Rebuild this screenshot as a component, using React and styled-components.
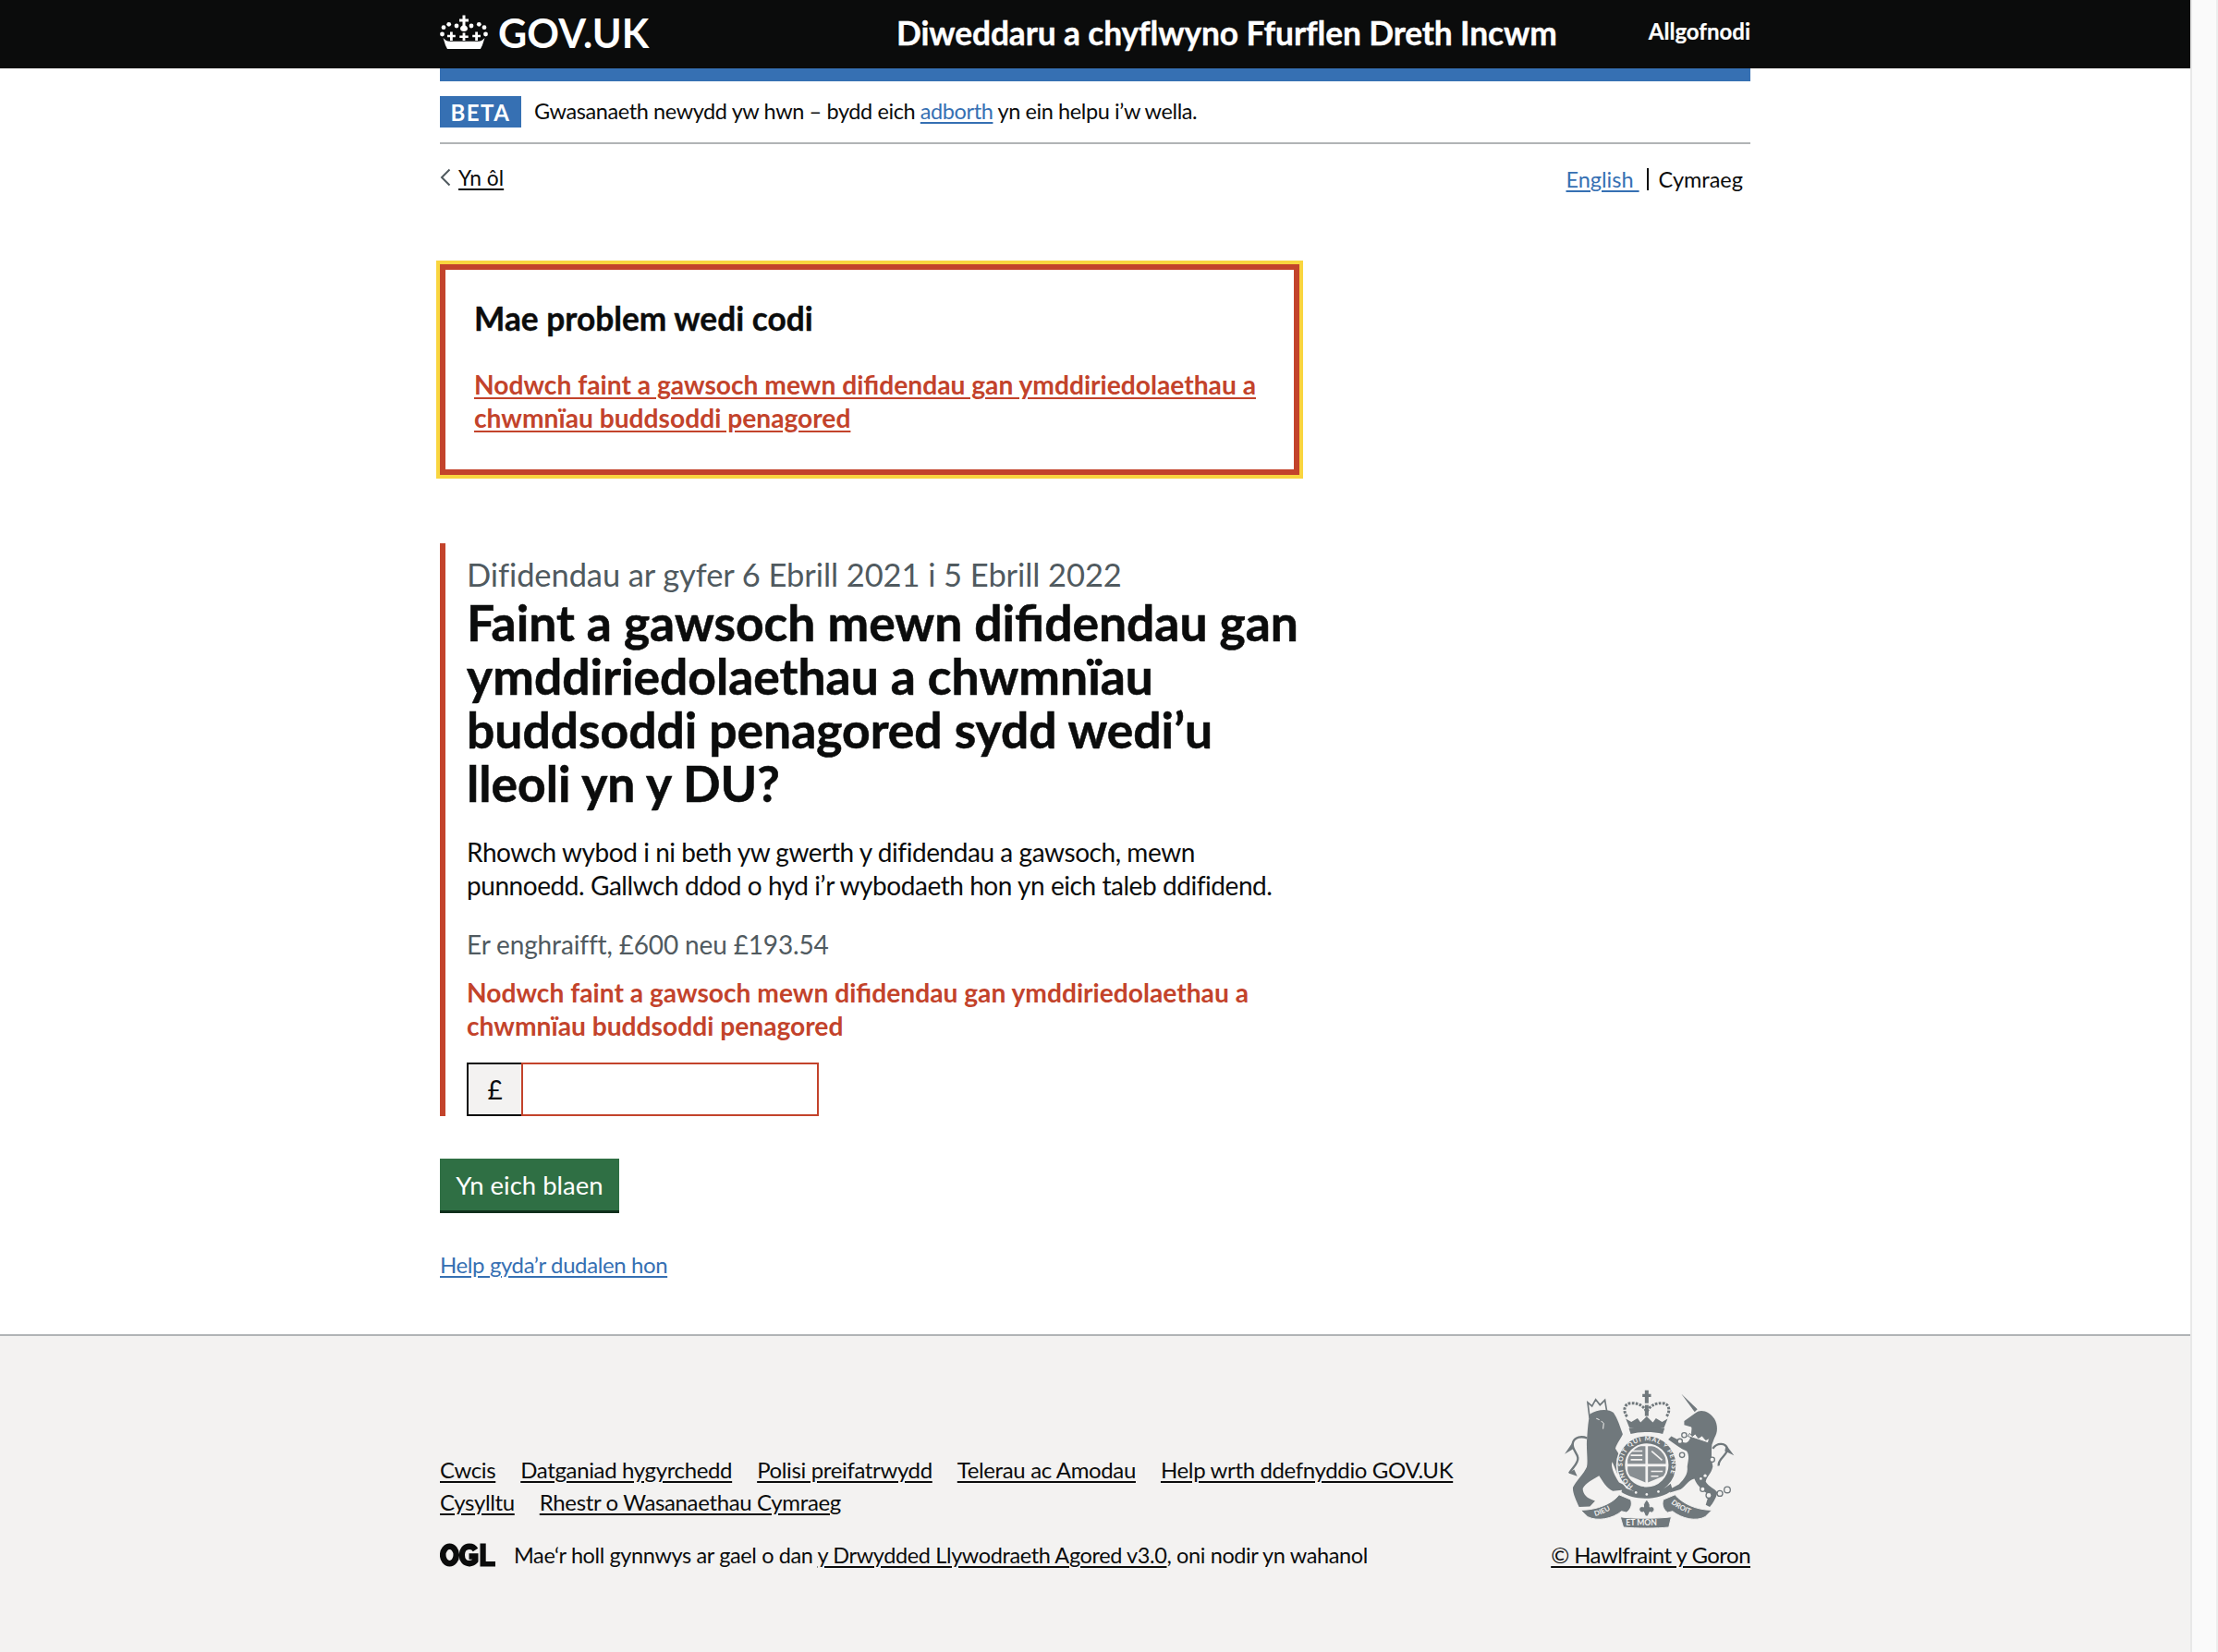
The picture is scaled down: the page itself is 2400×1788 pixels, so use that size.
import React from "react";
import styled, { createGlobalStyle } from "styled-components";

const Global = createGlobalStyle`
  html, body { margin: 0; padding: 0; background: #fff; }
  body { font-family: Lato, "Noto Sans", "Liberation Sans", sans-serif; color: #0b0c0c; }
  * { box-sizing: border-box; }
`;
const Shell = styled.div`display: flex; width: 2400px; height: 1788px; overflow: hidden;`;
const Page = styled.div`width: 2370px; height: 1788px; display: flex; flex-direction: column;`;
const Scrollbar = styled.div`width: 30px; background: #fafafa; border-left: 2px solid #e8e8e8; border-right: 2px solid #ededed;`;
const HeaderBar = styled.header`background: #0b0c0c; height: 74px; color: #fff; flex: none;`;
const Wrap = styled.div`width: 1418px; margin-left: 476px;`;
const HeaderInner = styled(Wrap)`display: flex; align-items: center; height: 74px;`;
const Logo = styled.div`display: flex; align-items: center; gap: 11px; width: 494px; height: 74px; padding-bottom: 3px; font-size: 43px; font-weight: 700; letter-spacing: .1px;`;
const ServiceName = styled.div`flex: 1; font-size: 35.3px; font-weight: 700; white-space: nowrap; letter-spacing: -.1px; margin-top: -3px; -webkit-text-stroke: .4px #fff;`;
const SignOut = styled.a`font-size: 24px; font-weight: 700; margin-top: -7px; -webkit-text-stroke: .2px #fff;`;
const BlueBar = styled(Wrap)`height: 14px; background: #3670b3; flex: none;`;
const Phase = styled(Wrap)`display: flex; align-items: center; gap: 14px; padding: 16px 0; height: 68px; border-bottom: 2px solid #b1b4b6; font-size: 23.5px; letter-spacing: -.4px; flex: none;`;
const PhaseText = styled.span`margin-top: -2px;`;
const Tag = styled.strong`background: #3670b3; color: #fff; width: 88px; height: 34px; display: flex; align-items: center; justify-content: center; font-size: 24px; letter-spacing: 1.5px; font-weight: 700;`;
const BlueLink = styled.a`color: #3670b3; text-decoration: underline; text-underline-offset: 3px;`;
const NavRow = styled(Wrap)`display: flex; justify-content: space-between; padding: 24px 8px 0 0; height: 130px; flex: none;`;
const Back = styled.div`display: flex; align-items: center; gap: 8px; height: 24px; font-size: 22.8px; a { color: #0b0c0c; text-decoration: underline; text-underline-offset: 3px; }`;
const Lang = styled.div`display: flex; align-items: center; height: 24px; font-size: 23.5px; margin-top: 2px;`;
const LangLink = styled(BlueLink)`white-space: pre;`;
const LangSep = styled.span`width: 2px; height: 24px; background: #0b0c0c; margin: 0 11px 0 8px;`;
const Main = styled(Wrap)`flex: 1;`;
const Summary = styled.div`width: 930px; height: 228px; border: 6px solid #c3432b; outline: 4px solid #f9d53f; padding: 31px 31px 0; margin-bottom: 74px;`;
const SummaryTitle = styled.h2`margin: 0 0 31px; font-size: 35.3px; line-height: 44px; font-weight: 700; -webkit-text-stroke: .4px #0b0c0c;`;
const SummaryLink = styled.a`display: block; font-size: 28.2px; line-height: 36px; font-weight: 700; color: #c3432b; text-decoration: underline; text-underline-offset: 3px; white-space: nowrap;`;
const ErrorGroup = styled.div`border-left: 6px solid #c3432b; padding-left: 23px; height: 620px; margin-bottom: 46px;`;
const Caption = styled.div`font-size: 34.5px; line-height: 43px; color: #505a5f; padding-top: 12px; padding-bottom: 1px; letter-spacing: -.1px; box-sizing: content-box;`;
const Heading = styled.h1`margin: 0 0 28px; font-size: 53.4px; line-height: 58px; font-weight: 700; white-space: nowrap; -webkit-text-stroke: .6px #0b0c0c;`;
const Body = styled.p`margin: 0 0 28px; font-size: 28px; line-height: 36px; white-space: nowrap; letter-spacing: -.44px;`;
const Hint = styled.div`font-size: 28px; line-height: 36px; color: #505a5f; margin-bottom: 16px; letter-spacing: -.15px;`;
const ErrorMsg = styled.div`font-size: 28.2px; line-height: 36px; font-weight: 700; color: #c3432b; margin-bottom: 22px; white-space: nowrap;`;
const InputRow = styled.div`display: flex; height: 58px;`;
const Prefix = styled.div`width: 59px; border: 2px solid #0b0c0c; border-right: none; background: #f3f2f1; display: flex; align-items: center; justify-content: center; font-size: 28px;`;
const Input = styled.div`width: 322px; border: 2px solid #c3432b; background: #fff;`;
const Button = styled.button`display: block; width: 194px; height: 59px; border: none; border-bottom: 3px solid #10301c; background: #2f6f44; color: #fff; font: 400 27.5px Lato, sans-serif; padding: 0; margin-bottom: 41px;`;
const HelpLink = styled(BlueLink)`font-size: 24px; letter-spacing: -.4px; display: inline-block;`;
const Footer = styled.footer`background: #f3f2f1; border-top: 2px solid #b1b4b6; height: 344px; flex: none;`;
const FooterInner = styled(Wrap)`display: flex; justify-content: space-between; height: 342px;`;
const FooterLeft = styled.div`padding-top: 127px; width: 1150px;`;
const FooterLinks = styled.div`display: flex; flex-wrap: wrap; column-gap: 27px; width: 1130px; font-size: 24px; line-height: 35px; letter-spacing: -.36px; a { color: #0b0c0c; text-decoration: underline; text-underline-offset: 3px; }`;
const Licence = styled.div`display: flex; align-items: center; gap: 20px; margin-top: 26px; font-size: 23.5px; letter-spacing: -.38px; white-space: nowrap; a { color: #0b0c0c; text-decoration: underline; text-underline-offset: 3px; }`;
const FooterRight = styled.div`display: flex; flex-direction: column; align-items: flex-end; padding-top: 58px;`;
const CrestFrame = styled.div`margin-right: 17px; height: 151px;`;
const CrestLink = styled.a`color: #0b0c0c; text-decoration: underline; font-size: 24px; letter-spacing: -.54px; margin-top: 13px; text-underline-offset: 3px;`;

const CrownIcon = () => (
  <svg width="52" height="39" viewBox="0 0 52 39" fill="#fff">
    <path d="M24.500.5h3v4h3.500v3h-3.500v4c1.500.8 2.500 2 2.500 3.500 0 1.800-1.800 3-4 3s-4-1.200-4-3c0-1.500 1-2.700 2.500-3.500v-4H21v-3h3.500z"/>
    <circle cx="4" cy="13.700" r="2.400"/><circle cx="9.700" cy="10.300" r="2.400"/><circle cx="18" cy="12" r="2.400"/>
    <circle cx="34" cy="12" r="2.400"/><circle cx="42.300" cy="10.300" r="2.400"/><circle cx="48" cy="13.700" r="2.400"/>
    <circle cx="2.500" cy="21" r="2.400"/><circle cx="49.500" cy="21" r="2.400"/>
    <path d="M11 18.500h2.800v3.200h3v2.600h-3V28H11v-3.700H8v-2.600h3z"/>
    <path d="M24.600 19.500h2.800v3h3.300v2.600h-3.300V28h-2.800v-2.900h-3.300v-2.600h3.300z"/>
    <path d="M38.200 18.500H41v3.200h3v2.600h-3V28h-2.800v-3.700h-3v-2.600h3z"/>
    <path d="M3.500 25c2 2.400 4 3.600 7 3.800h31c3-.2 5-1.400 7-3.800l-2.600 8-2 4H8l-2-4z"/>
  </svg>
);

const Chevron = () => (
  <svg width="12" height="20" viewBox="0 0 12 20" fill="none" stroke="#505a5f" strokeWidth="2"><path d="M10.500 1.500 2 10l8.500 8.500"/></svg>
);

const OglLogo = () => (
  <svg width="60" height="26" viewBox="0 0 60 26">
    <ellipse cx="10.500" cy="13" rx="7.300" ry="9.200" fill="none" stroke="#0b0c0c" strokeWidth="6.600"/>
    <path d="M38.500 7.500C37 5 34.500 3.800 31.800 3.800c-5 0-8 4-8 9.200s3 9.200 8 9.200c2.800 0 5-1.200 6.500-3V14.500h-6.800" fill="none" stroke="#0b0c0c" strokeWidth="6.400"/>
    <path d="M43.500.5h6.200v19.500H60v5.500H43.500z" fill="#0b0c0c"/>
  </svg>
);

const Crest = () => {
  const g = "#70787c";
  const bg = "#f3f2f1";
  return (
    <svg width="185" height="151" viewBox="160 70 556 454" fontFamily="Lato, sans-serif" fontWeight="700">
      <defs>
        <path id="garter" d="M388 384A80 80 0 1 1 474 384" />
        <path id="ribL" d="M256 483C290 475 322 459 344 435" />
        <path id="ribR" d="M504 436C528 458 565 476 604 482" />
      </defs>
      {/* lion */}
      <g fill={g}>
        <path d="M238 112l14 12 12-22 14 18 16-16 4 24 2 12-56 20z" fill="none" stroke={g} strokeWidth="5"/>
        <path d="M245 150C265 135 305 130 322 145C335 165 340 180 352 215C345 232 335 240 328 262L352 300C360 312 365 330 352 345L335 345L318 305C312 318 322 345 340 372L365 384L355 396L320 400C300 392 285 365 275 350C255 362 232 372 222 392C222 410 235 425 262 432L245 450L210 452C200 430 188 405 190 388C200 368 225 345 235 322C240 300 232 260 236 225C238 195 240 170 245 150Z"/>
        <path d="M236 228C218 220 196 224 190 242C184 262 204 276 206 292C208 310 190 322 178 342" fill="none" stroke={g} strokeWidth="7"/>
        <path d="M190 240l-27 40 30-18z M176 342l28 10-10-22z"/>
      </g>
      <path d="M282 172l8 8-2 18M266 164l10 4" stroke={bg} strokeWidth="3" fill="none"/>
      {/* unicorn */}
      <g fill={g}>
        <path d="M543 84l52 50-9 9z"/>
        <path d="M552 172L590 145C605 132 635 140 650 165C662 185 662 210 650 228L642 250C640 275 640 300 645 320C640 345 625 350 622 370C630 385 655 395 660 405C655 425 645 440 635 452L622 445L632 412C615 400 595 385 585 360C565 365 555 385 540 395L505 405L510 392L535 378C552 360 565 345 562 320C565 300 570 285 560 270C540 262 520 245 500 232L510 222L545 240C560 248 570 240 575 215C575 200 580 190 570 190L552 185Z"/>
        <path d="M645 262C660 240 688 244 692 262C696 282 660 295 664 318" fill="none" stroke={g} strokeWidth="7"/>
        <path d="M688 250l26 34-30-14z"/>
      </g>
      <path d="M570 212l8 10 10-8 10 14 12-8 12 14 12-6-4 16-66-22z" fill={bg} stroke={g} strokeWidth="3"/>
      <g fill={bg} stroke={g} strokeWidth="4">
        <circle cx="552" cy="218" r="8"/><circle cx="538" cy="238" r="8"/><circle cx="545" cy="283" r="8"/>
        <circle cx="643" cy="298" r="8"/><circle cx="612" cy="394" r="8"/><circle cx="632" cy="414" r="9"/>
        <circle cx="668" cy="408" r="9"/><circle cx="692" cy="396" r="10"/>
      </g>
      <g fill={bg}><circle cx="620" cy="350" r="5"/><circle cx="632" cy="362" r="5"/><circle cx="606" cy="360" r="4"/></g>
      {/* royal crown */}
      <g fill={g}>
        <path d="M424 72h12v12h8v10h-8v20h-12V94h-8V84h8z"/>
        <path d="M366 158c-14-18-10-44 14-44 20 0 38 6 50 28 12-22 30-28 50-28 24 0 28 26 14 44" fill="none" stroke={g} strokeWidth="9" strokeDasharray="8 4"/>
        <path d="M362 165l18 10 20-12 10 14 20-20 20 20 10-14 20 12 18-10-12 30H374z"/>
        <path d="M372 196c36-8 80-8 116 0l-6 18c-32-8-72-8-104 0z"/>
        <rect x="424" y="120" width="12" height="36"/>
      </g>
      {/* shield and garter */}
      <circle cx="430" cy="316" r="97" fill={g} stroke={bg} strokeWidth="5"/>
      <text fill={bg} fontSize="21" letterSpacing="2.800"><textPath href="#garter" startOffset="2">HONI SOIT QUI MAL Y PENSE</textPath></text>
      <circle cx="430" cy="316" r="68" fill={bg}/>
      <path d="M368 254h58v58h-58z M434 254h58v58h-58z M368 320h58v52l-58-24z M434 320h58v28l-58 24z" fill={g} opacity=".82"/>
      <path d="M378 270h38M378 284h38M378 298h38M444 336h38M444 352h24M446 270l34 30" stroke={bg} strokeWidth="5" fill="none"/>
      <circle cx="430" cy="316" r="68" fill="none" stroke={bg} strokeWidth="6"/>
      <path d="M430 248v136M362 316h136" stroke={bg} strokeWidth="6"/>
      <path d="M352 384c40 28 116 28 156-8l6 20c-40 36-126 36-166 8z" fill={g}/>
      <g fill={bg}><circle cx="430" cy="411" r="4"/><circle cx="395" cy="405" r="4"/><circle cx="468" cy="402" r="4"/></g>
      {/* ribbon */}
      <g fill={g} stroke={bg} strokeWidth="3">
        <path d="M215 462C270 462 320 440 340 412L378 428C384 445 378 460 364 470L348 466C320 490 270 500 238 484Z"/>
        <path d="M642 462C590 462 545 440 522 412L484 428C478 445 484 460 498 470L514 466C545 490 590 500 620 484Z"/>
        <path d="M344 484c30 6 130 6 166 0l-8 34c-40 4-106 4-148 0z"/>
      </g>
      <path d="M430 428c6 8 12 14 10 24 8-4 16 2 14 10-2 8-10 10-14 6l-6 14h-8l-6-14c-4 4-12 2-14-6-2-8 6-14 14-10-2-10 4-16 10-24z" fill={g} stroke={bg} strokeWidth="3"/>
      <text fill={bg} fontSize="23"><textPath href="#ribL" startOffset="6">DIEU</textPath></text>
      <text fill={bg} fontSize="23"><textPath href="#ribR" startOffset="6">DROIT</textPath></text>
      <text x="362" y="512" fill={bg} fontSize="26">ET MON</text>
    </svg>
  );
};

export default function App() {
  return (
    <Shell>
      <Global />
      <Page>
        <HeaderBar>
          <HeaderInner>
            <Logo><CrownIcon />GOV.UK</Logo>
            <ServiceName>Diweddaru a chyflwyno Ffurflen Dreth Incwm</ServiceName>
            <SignOut>Allgofnodi</SignOut>
          </HeaderInner>
        </HeaderBar>
        <BlueBar />
        <Phase>
          <Tag>BETA</Tag>
          <PhaseText>Gwasanaeth newydd yw hwn – bydd eich <BlueLink>adborth</BlueLink> yn ein helpu i’w wella.</PhaseText>
        </Phase>
        <NavRow>
          <Back><Chevron /><a>Yn ôl</a></Back>
          <Lang><LangLink>English </LangLink><LangSep />Cymraeg</Lang>
        </NavRow>
        <Main>
          <Summary>
            <SummaryTitle>Mae problem wedi codi</SummaryTitle>
            <SummaryLink>Nodwch faint a gawsoch mewn difidendau gan ymddiriedolaethau a<br />chwmnïau buddsoddi penagored</SummaryLink>
          </Summary>
          <ErrorGroup>
            <Caption>Difidendau ar gyfer 6 Ebrill 2021 i 5 Ebrill 2022</Caption>
            <Heading>Faint a gawsoch mewn difidendau gan<br />ymddiriedolaethau a chwmnïau<br />buddsoddi penagored sydd wedi’u<br />lleoli yn y DU?</Heading>
            <Body>Rhowch wybod i ni beth yw gwerth y difidendau a gawsoch, mewn<br />punnoedd. Gallwch ddod o hyd i’r wybodaeth hon yn eich taleb ddifidend.</Body>
            <Hint>Er enghraifft, £600 neu £193.54</Hint>
            <ErrorMsg>Nodwch faint a gawsoch mewn difidendau gan ymddiriedolaethau a<br />chwmnïau buddsoddi penagored</ErrorMsg>
            <InputRow><Prefix>£</Prefix><Input /></InputRow>
          </ErrorGroup>
          <Button>Yn eich blaen</Button>
          <HelpLink>Help gyda’r dudalen hon</HelpLink>
        </Main>
        <Footer>
          <FooterInner>
            <FooterLeft>
              <FooterLinks>
                <a>Cwcis</a><a>Datganiad hygyrchedd</a><a>Polisi preifatrwydd</a><a>Telerau ac Amodau</a><a>Help wrth ddefnyddio GOV.UK</a><a>Cysylltu</a><a>Rhestr o Wasanaethau Cymraeg</a>
              </FooterLinks>
              <Licence><OglLogo /><span>Mae‘r holl gynnwys ar gael o dan <a>y Drwydded Llywodraeth Agored v3.0</a>, oni nodir yn wahanol</span></Licence>
            </FooterLeft>
            <FooterRight>
              <CrestFrame><Crest /></CrestFrame>
              <CrestLink>© Hawlfraint y Goron</CrestLink>
            </FooterRight>
          </FooterInner>
        </Footer>
      </Page>
      <Scrollbar />
    </Shell>
  );
}
